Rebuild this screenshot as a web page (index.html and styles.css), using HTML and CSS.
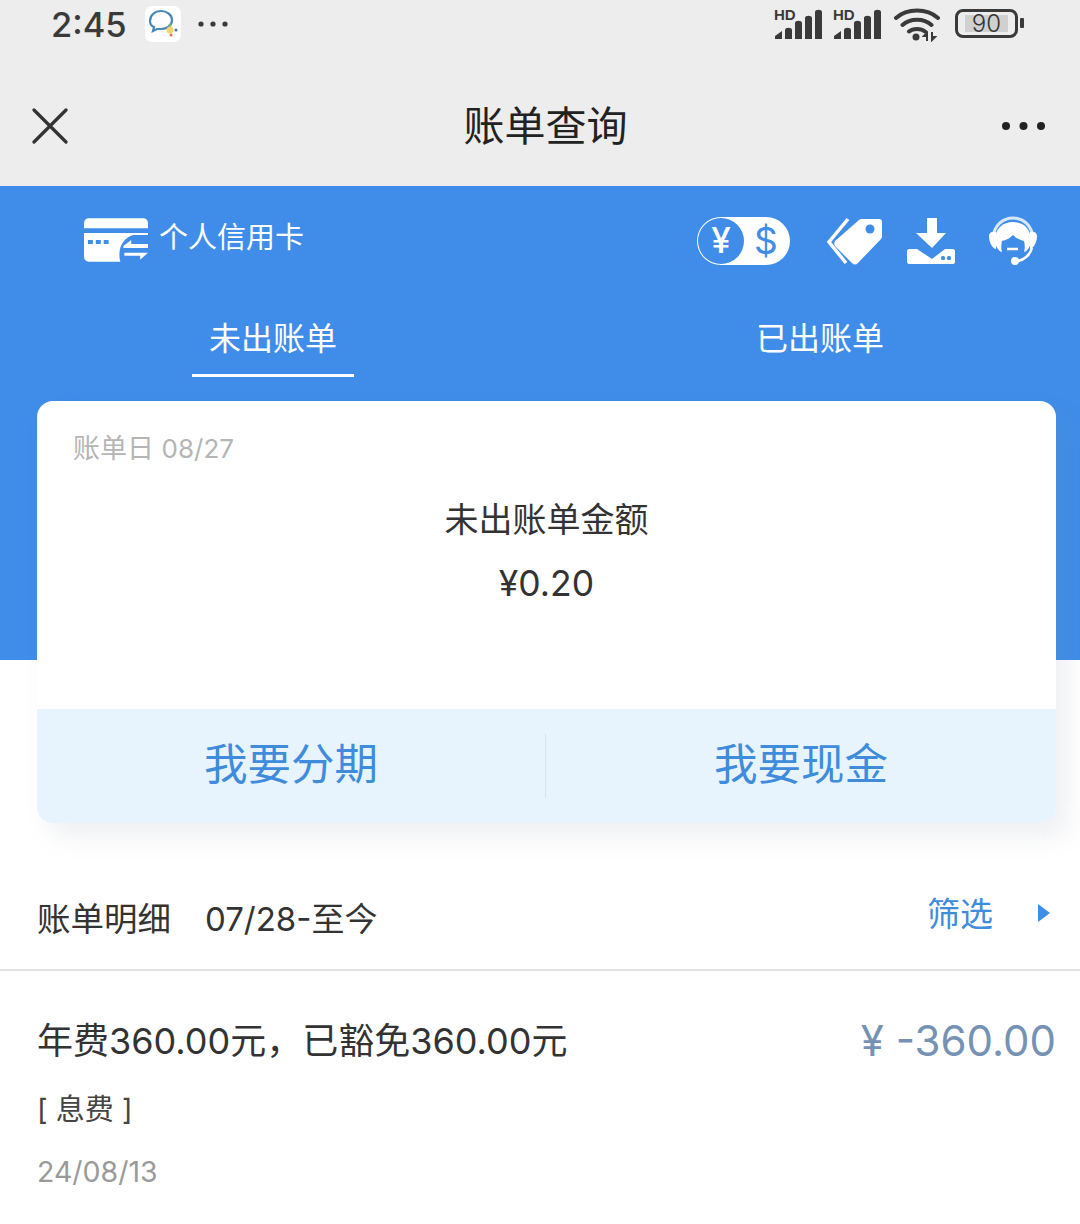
FILE: index.html
```html
<!DOCTYPE html>
<html lang="zh-CN">
<head>
<meta charset="utf-8">
<title>账单查询</title>
<link rel="stylesheet" href="styles.css">
</head>
<body>
<header class="status">
  <div class="status-left">
    <span class="clock">2:45</span>
    <svg class="app-icon" width="36" height="36" viewBox="0 0 36 36"><rect width="36" height="36" rx="7" fill="#fff"/><path d="M5 15c0-6 5-10 11-10s11 4 11 9c0 6-5 9-11 9-2 0-3 0-4 0l-4 2 1-4c-3-1-4-3-4-6z" fill="none" stroke="#4a86b8" stroke-width="2.200"/><circle cx="25" cy="24" r="3.500" fill="#f2d66b"/><circle cx="25" cy="19" r="1.500" fill="#6cb76a"/><circle cx="31" cy="24" r="1.500" fill="#3f78c9"/><circle cx="26" cy="29" r="1.500" fill="#e0764e"/></svg>
    <svg class="dots-small" width="30" height="6" viewBox="0 0 30 6"><circle cx="3" cy="3" r="2.600"/><circle cx="15" cy="3" r="2.600"/><circle cx="27" cy="3" r="2.600"/></svg>
  </div>
  <div class="status-right">
    <svg class="signal" width="48" height="34" viewBox="0 0 48 34"><text x="0" y="14" class="hd">HD</text><path d="M1 33v-3l7-5v8zM11 33v-9c0-3 7-3 7 0v9zM21 33v-16c0-3 7-3 7 0v16zM31 33v-21c0-3 7-3 7 0v21zM41 33v-27c0-3 7-3 7 0v27z"/></svg>
    <svg class="signal" width="48" height="34" viewBox="0 0 48 34"><text x="0" y="14" class="hd">HD</text><path d="M1 33v-3l7-5v8zM11 33v-9c0-3 7-3 7 0v9zM21 33v-16c0-3 7-3 7 0v16zM31 33v-21c0-3 7-3 7 0v21zM41 33v-27c0-3 7-3 7 0v27z"/></svg>
    <svg class="wifi" width="46" height="36" viewBox="0 0 46 36"><path d="M2 12C13 2 33 2 44 12M8.500 19C16 12 30 12 37.500 19M15 25.500C19 22 27 22 31 25.500" fill="none" stroke="#3a3a3a" stroke-width="4" stroke-linecap="round"/><circle cx="22" cy="31" r="3.500" fill="#3a3a3a"/><path d="M33 35v-8l-3 3h3M38 26v8l3-3h-3" fill="none" stroke="#3a3a3a" stroke-width="2"/></svg>
    <div class="battery"><span class="battery-level">90</span></div>
    <span class="battery-cap"></span>
  </div>
</header>

<nav class="nav">
  <svg class="close" width="36" height="36" viewBox="0 0 36 36"><path d="M2 2l32 32M34 2L2 34" fill="none" stroke="#333" stroke-width="3.200" stroke-linecap="round"/></svg>
  <h1 class="nav-title">账单查询</h1>
  <svg class="more" width="44" height="10" viewBox="0 0 44 10"><circle cx="5" cy="5" r="4"/><circle cx="22.500" cy="5" r="4"/><circle cx="40" cy="5" r="4"/></svg>
</nav>

<section class="hero">
  <div class="toolbar">
    <div class="card-type">
      <svg width="64" height="45" viewBox="0 0 65 45"><path d="M0 5c0-3 2-5 5-5h55c3 0 5 2 5 5v5H0z" fill="#fff"/><path d="M0 15h65v2H50c-8 2-14 10-14 19 0 3 0 6 1 8H5c-3 0-5-2-5-5z" fill="#fff"/><path d="M4 22h5v4H4zM12 22h5v4h-5zM20 22h5v4h-5z" fill="#3f8de9"/><path d="M40 28l8-6v4h17v4H40zM65 35l-8 7v-4H41v-3h24z" fill="#fff"/></svg>
      <span class="card-label">个人信用卡</span>
    </div>
    <div class="tools">
      <div class="currency">
        <span class="currency-on">¥</span>
        <span class="currency-off">$</span>
      </div>
      <svg class="tool-tag" width="57" height="48" viewBox="0 0 57 48"><path d="M22 2L3 25l17 21" fill="none" stroke="#fff" stroke-width="3.500"/><path d="M36 2h17c2 0 3 1 3 3v14c0 1 0 2-1 3L32 46c-2 2-4 2-6 0L9 29c-1-2-1-3 0-5L33 3c1-1 2-1 3-1z" fill="#fff"/><circle cx="44" cy="12" r="4.500" fill="#3f8de9"/></svg>
      <svg class="tool-download" width="48" height="48" viewBox="0 0 48 48"><path d="M20 1h10v15h9L25 31 9 16h11z" fill="#fff"/><path d="M2 32h8l15 10 13-10h8c1 0 2 1 2 2v11c0 1-1 2-2 2H2c-1 0-2-1-2-2V34c0-1 1-2 2-2z" fill="#fff"/><rect x="34" y="39" width="4" height="4" rx="1.500" fill="#3f8de9"/><rect x="40" y="39" width="4" height="4" rx="1.500" fill="#3f8de9"/></svg>
      <svg class="tool-service" width="50" height="50" viewBox="0 0 50 50"><path d="M5 22C6 9 15 2 25 2s19 7 20 20" fill="none" stroke="#fff" stroke-width="3" opacity=".8"/><path d="M7 25C7 12 15 6 25 6s18 6 18 19c0 4-3 10-7 11 1-3 1-7 0-11-5-1-8-3-11-6-3 3-6 5-11 6-1 4-1 8 0 11-4-1-7-7-7-11z" fill="#fff"/><path d="M1 20c0-4 4-5 7-4v17C4 32 1 26 1 20zM49 20c0-4-4-5-7-4v17c4-1 7-7 7-13z" fill="#fff"/><path d="M44 32c-2 7-8 12-14 13" fill="none" stroke="#fff" stroke-width="2.500"/><circle cx="27" cy="45" r="4" fill="#fff"/><path d="M19 33h11" stroke="#fff" stroke-width="2.500"/></svg>
    </div>
  </div>
  <div class="tabs">
    <span class="tab tab-active">未出账单</span>
    <span class="tab">已出账单</span>
  </div>
  <div class="card">
    <div class="card-body">
      <div class="bill-date">账单日 <span class="bill-num">08/27</span></div>
      <div class="amount-label">未出账单金额</div>
      <div class="amount">¥0.20</div>
    </div>
    <div class="actions">
      <a class="action">我要分期</a>
      <a class="action">我要现金</a>
    </div>
  </div>
</section>

<section class="detail-head">
  <div class="detail-title"><span>账单明细</span><span class="detail-range">07/28-至今</span></div>
  <div class="filter"><span>筛选</span><svg class="filter-arrow" width="12" height="18" viewBox="0 0 12 18"><path d="M0 0l12 9-12 9z" fill="#3f8de9"/></svg></div>
</section>

<section class="row">
  <div class="row-main">
    <div class="row-title">年费360.00元，已豁免360.00元</div>
    <div class="row-amount">¥ -360.00</div>
  </div>
  <div class="row-tag">[ 息费 ]</div>
  <div class="row-date">24/08/13</div>
</section>
</body>
</html>
```

FILE: styles.css
```css
* { box-sizing: border-box; }
html, body { margin: 0; padding: 0; }
body {
  width: 1080px;
  height: 1224px;
  overflow: hidden;
  background: #fff;
  color: #333;
  font-family: Inter, "Noto Sans CJK SC", sans-serif;
}
.status {
  height: 66px;
  background: #ededed;
  display: flex;
  justify-content: space-between;
  align-items: flex-start;
  padding: 0 56px 0 51px;
}
.status-left { display: flex; align-items: center; height: 48px; }
.clock { font-size: 34.500px; font-weight: 500; color: #3a3a3a; width: 94px; }
.app-icon { margin-right: 17px; }
.dots-small { fill: #3a3a3a; }
.status-right { display: flex; align-items: flex-start; padding-top: 6px; }
.signal { fill: #3a3a3a; margin-right: 11px; }
.hd { font: 700 15px "Liberation Sans", sans-serif; }
.wifi { margin: 0 15px 0 2px; }
.battery {
  width: 63px;
  height: 29px;
  margin-top: 3px;
  border: 3px solid #3a3a3a;
  border-radius: 8px;
  padding: 3px 7px;
}
.battery-level {
  display: block;
  width: 43px;
  height: 17px;
  background: #d0d0d0;
  font-size: 24px;
  font-weight: 300;
  line-height: 17px;
  color: #333;
  text-align: center;
}
.battery-cap {
  width: 4px;
  height: 10px;
  margin: 12px 0 0 2px;
  background: #3a3a3a;
  border-radius: 1px;
}
.nav {
  height: 120px;
  background: #ededed;
  display: flex;
  align-items: center;
  justify-content: space-between;
  padding: 0 35px 0 32px;
}
.nav-title {
  margin: 0 0 6px 22px;
  font-size: 41px;
  font-weight: 400;
  color: #222;
}
.more { fill: #222; }
.hero {
  height: 474px;
  background: #3f8de9;
  padding-top: 30px;
}
.toolbar {
  height: 50px;
  display: flex;
  justify-content: space-between;
  align-items: center;
  padding: 0 42px 0 84px;
}
.card-type { display: flex; align-items: center; margin-top: -2px; }
.card-label { font-size: 29px; color: #fff; margin: -11px 0 0 11px; }
.tools { display: flex; align-items: center; margin-top: 0; }
.currency {
  width: 93px;
  height: 48px;
  border-radius: 24px;
  background: #fff;
  display: flex;
  align-items: center;
  color: #3f8de9;
  font-size: 37px;
  margin-right: 36px;
}
.currency-on {
  width: 46px;
  height: 46px;
  margin-left: 1px;
  border-radius: 50%;
  background: #3f8de9;
  color: #fff;
  text-align: center;
  line-height: 45px;
  font-size: 35px;
  font-weight: 500;
}
.currency-off { margin-left: 10px; line-height: 48px; font-weight: 400; }
.tool-tag { margin-right: 24px; }
.tool-download { margin-right: 33px; }
.tabs {
  display: flex;
  gap: 385px;
  padding-left: 192px;
  margin-top: 51px;
  height: 61px;
}
.tab {
  width: 162px;
  height: 60px;
  text-align: center;
  color: #fff;
  font-size: 32px;
  line-height: 44px;
}
.tab-active { border-bottom: 3px solid #fff; }
.card {
  position: relative;
  width: 1019px;
  height: 422px;
  margin: 23px 0 0 37px;
  background: #fff;
  border-radius: 16px;
  box-shadow: 12px 14px 24px rgba(120, 130, 150, .12);
  display: flex;
  flex-direction: column;
  overflow: hidden;
}
.card-body { height: 308px; padding-top: 28px; text-align: center; }
.bill-date { text-align: left; padding-left: 36px; font-size: 27px; line-height: 40px; color: #b5b5b5; }
.bill-num { font-size: 26px; }
.amount-label { margin-top: 29px; font-size: 34px; line-height: 44px; color: #333; }
.amount { margin-top: 20px; font-size: 35.500px; line-height: 44px; color: #333; }
.actions {
  flex: 1;
  display: grid;
  grid-template-columns: 509px 1fr;
  align-items: center;
  background: #e8f4fd;
}
.action {
  height: 64px;
  line-height: 60px;
  text-align: center;
  font-size: 43.500px;
  color: #3f8bdc;
}
.action:first-child { border-right: 1px solid #d7e3ec; }
.detail-head {
  height: 311px;
  padding: 235px 30px 0 37px;
  display: flex;
  justify-content: space-between;
  align-items: flex-start;
  border-bottom: 2px solid #e2e2e2;
}
.detail-title { display: flex; gap: 34px; font-size: 33.500px; line-height: 48px; color: #333; }
.detail-range { font-size: 33px; }
.filter { display: flex; align-items: center; gap: 45px; font-size: 33px; line-height: 44px; color: #3f8bdc; margin-top: -3px; }
.filter-arrow { margin-top: -3px; }
.row { padding: 0 24px 0 37px; }
.row-main { display: flex; justify-content: space-between; align-items: center; margin-top: 45px; }
.row-title { font-size: 36px; line-height: 48px; color: #333; }
.row-amount { font-size: 42px; line-height: 50px; color: #7592b5; }
.row-tag { margin-top: 24px; font-size: 29px; line-height: 40px; color: #444; }
.row-date { margin-top: 22px; font-size: 28.500px; line-height: 40px; color: #9a9a9a; }
```
